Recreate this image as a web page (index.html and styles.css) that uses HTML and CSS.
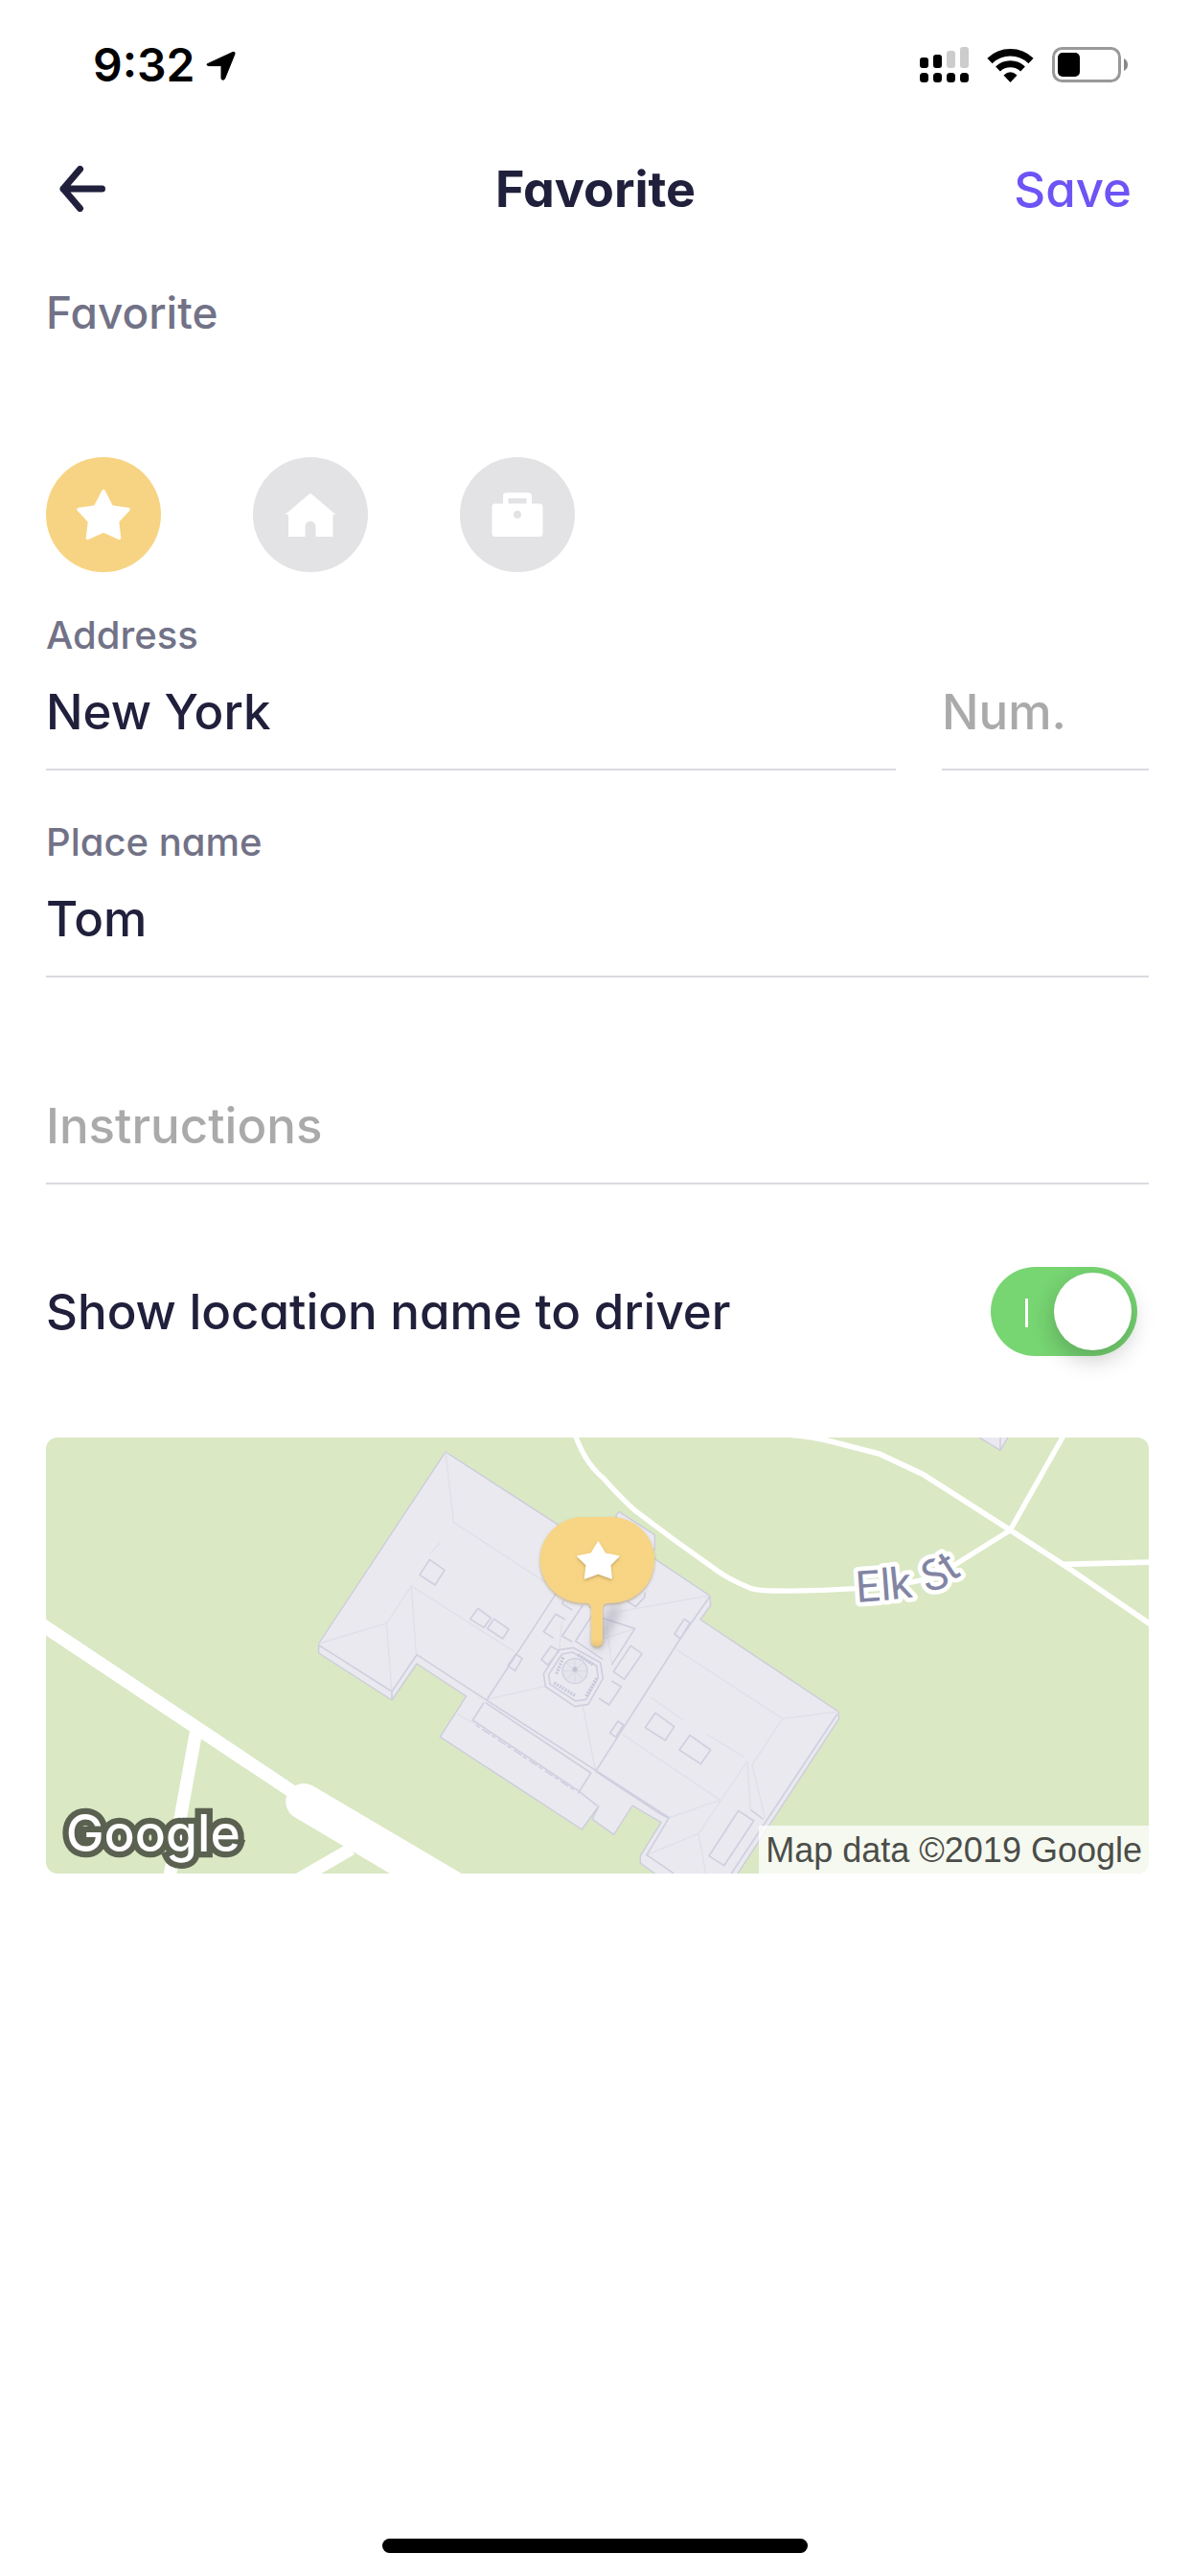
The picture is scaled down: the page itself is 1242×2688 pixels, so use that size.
FILE: index.html
```html
<!DOCTYPE html>
<html lang="en">
<head>
<meta charset="utf-8">
<meta name="viewport" content="width=device-width, initial-scale=1">
<title>Favorite</title>
<link rel="stylesheet" href="styles.css">
</head>
<body>
<div class="screen">
  <div class="status-bar">
    <div class="status-left">
      <span class="clock">9:32</span>
      <svg class="icon-location" viewBox="0 0 32 32" aria-hidden="true"><path d="M2.500 14.200 28 2.400 Q30.600 1.600 30 4.400 L19.600 30 Q18.600 32 16.600 31 Q16 30.400 16 29 V16.600 H2.800 Q.800 16.400 1 15 Z" stroke="#000" stroke-linejoin="round"/></svg>
    </div>
    <div class="status-right">
      <svg class="icon-signal" viewBox="0 0 51 37" aria-hidden="true">
        <g fill="#000"><rect y="11" width="9" height="11" rx="3"/><rect x="14" y="8" width="9" height="14" rx="3"/><rect y="27" width="9" height="10" rx="3.500"/><rect x="14" y="27" width="9" height="10" rx="3.500"/><rect x="28" y="27" width="9" height="10" rx="3.500"/><rect x="42" y="27" width="9" height="10" rx="3.500"/></g>
        <g fill="#ccc"><rect x="28" y="4" width="9" height="18" rx="3"/><rect x="42" y="0" width="9" height="22" rx="3"/></g>
      </svg>
      <svg class="icon-wifi" viewBox="0 0 49 36" aria-hidden="true">
        <path d="M3 13.500A31 31 0 0 1 46 13.500" fill="none" stroke="#000" stroke-width="7.500"/>
        <path d="M11.500 22A19 19 0 0 1 37.500 22" fill="none" stroke="#000" stroke-width="7"/>
        <path d="M24.500 36 17.500 28.500Q24.500 22 31.500 28.500Z"/>
      </svg>
      <svg class="icon-battery" viewBox="0 0 79 37" aria-hidden="true">
        <rect x="1.500" y="1.500" width="69" height="34" rx="9" fill="none" stroke="#999" stroke-width="3"/>
        <rect x="6" y="6" width="23" height="25" rx="5"/>
        <path d="M75 12Q79 14 79 18.500T75 25Z" fill="#888"/>
      </svg>
    </div>
  </div>

  <header class="nav">
    <button class="nav-back" type="button" aria-label="Back">
      <svg class="icon-back" viewBox="0 0 48 48" aria-hidden="true"><path d="M21.500 3.500 4 24 21.500 44.500M4 24H44.500" fill="none" stroke="currentColor" stroke-width="7" stroke-linecap="round" stroke-linejoin="round"/></svg>
    </button>
    <h1 class="nav-title">Favorite</h1>
    <button class="nav-save" type="submit" form="place">Save</button>
  </header>

  <form class="content" id="place">
    <fieldset class="kinds">
      <legend class="kinds-title">Favorite</legend>
      <div class="kinds-row">
        <label class="kind">
          <input class="kind-input" type="radio" name="kind" aria-label="Favorite" checked>
          <svg class="kind-icon" viewBox="0 0 120 120" aria-hidden="true"><path d="M60 35.500 68.500 52 86 54.500 74.500 67 76.500 84.500 60 77 43.500 84.500 45.500 67 34 54.500 51.500 52Z" fill="#fff" stroke="#fff" stroke-width="3.500" stroke-linejoin="round"/></svg>
        </label>
        <label class="kind">
          <input class="kind-input" type="radio" name="kind" aria-label="Home">
          <svg class="kind-icon" viewBox="0 0 120 120" aria-hidden="true"><path d="M60 37.500 86.500 60H83.500V83H65.500V73Q65.500 67 60 67T54.500 73V83H37V60H33.500Z" fill="#fff"/></svg>
        </label>
        <label class="kind">
          <input class="kind-input" type="radio" name="kind" aria-label="Work">
          <svg class="kind-icon" viewBox="0 0 120 120" aria-hidden="true"><path fill="#fff" fill-rule="evenodd" d="M37 48.500H45V41Q45 37 49 37H71Q75 37 75 41V48.500H83Q86.500 48.500 86.500 52V79.500Q86.500 83 83 83H37Q33.500 83 33.500 79.500V52Q33.500 48.500 37 48.500ZM50.500 43V48.500H69.500V43ZM60 56A4 4 0 1 0 60 64 4 4 0 1 0 60 56Z"/></svg>
        </label>
      </div>
    </fieldset>

    <div class="field-row">
      <div class="field field-wide">
        <label class="field-label" for="address">Address</label>
        <input class="field-input" id="address" type="text" value="New York">
      </div>
      <div class="field field-narrow">
        <input class="field-input" type="text" placeholder="Num." aria-label="Number">
      </div>
    </div>
    <div class="field">
      <label class="field-label" for="place-name">Place name</label>
      <input class="field-input" id="place-name" type="text" value="Tom">
    </div>
    <div class="field">
      <input class="field-input" type="text" placeholder="Instructions" aria-label="Instructions">
    </div>

    <div class="toggle-row">
      <label class="toggle-label" for="show-name">Show location name to driver</label>
      <input class="toggle" id="show-name" type="checkbox" role="switch" checked>
    </div>

    <div class="map">
      <svg class="map-canvas" viewBox="-786 60 3453 1365" role="img" aria-label="Map of the selected place">
        <defs>
          <linearGradient id="pin-fill" x1="0" y1="0" x2="0" y2="1"><stop offset="0" stop-color="#f7d584"/><stop offset=".94" stop-color="#f7d483"/><stop offset="1" stop-color="#e8c478"/></linearGradient>
          <filter id="pin-shadow" x="-20%" y="-20%" width="140%" height="150%"><feDropShadow dx="0" dy="5" stdDeviation="4" flood-color="#8a7440" flood-opacity=".5"/></filter>
          <filter id="soft" x="-80%" y="-80%" width="260%" height="260%"><feGaussianBlur stdDeviation="16"/></filter>
        </defs>
        <rect x="-786" y="60" width="3453" height="1365" fill="#dae8c4"/>
        <g fill="none" stroke="#fff" stroke-linejoin="round">
          <path d="M-800 645-320 965 10 1185" stroke-width="42"/>
          <path d="M22 1200 620 1553" stroke-width="114" stroke-linecap="round"/>
          <path d="M170 1348 0 1446M-315 975-400 1440" stroke-width="40"/>
          <path d="M868 45Q890 105 914 138T960 188Q1010 245 1060 290L1180 380 1320 480Q1370 513 1420 532 1450 540 1500 540 1620 542 1750 533 1850 530 1930 512 2000 500 2060 458L2233 350 2405 45" stroke-width="16"/>
          <path d="M1550 52Q1610 56 1680 74L1825 112 1960 175 2233 350 2410 465 2680 650M2395 457 2680 450" stroke-width="17"/>
        </g>
        <g fill="#eae9f0" stroke="#ccccdb" stroke-width="4" stroke-linejoin="round">
          <path d="M2130 56 2202 100 2228 56ZM2202 56V100"/>
          <path d="M998 305 1008 292 1120 365V410L1080 430Z"/>
          <path d="M465 105 820 335 1120 440 1292 555 1295 585 1263 630 1695 918 1697 940 1370 1440H1140L1075 1392V1370L1140 1265 1050 1212 992 1303 925 1255 945 1213 892 1287 448 997 530 870 375 768 297 882 68 735V705Z"/>
        </g>
        <g fill="none" stroke="#dfe0e7" stroke-width="4">
          <path d="M465 105 490 325 780 515M68 705 280 642 358 525 680 730M280 642 297 855M358 525 373 740M415 425 448 390M595 880 778 838M895 900 935 1105M1190 725 1520 940 1695 918M1520 940 1425 1085 1465 1250M1410 1073 1420 1225M1410 1073 1257 1300 1280 1425M1020 990 1325 1195 1165 1250M1257 1300 1095 1367M1010 605 1290 555M960 690 1058 658M970 650 985 765M830 635 820 730M500 925 555 955M1110 875 1210 945M1285 990 1400 1060"/>
        </g>
        <g fill="none" stroke="#cfcfdf" stroke-width="5" stroke-linejoin="round">
          <path d="M68 710 297 855 375 740 590 880 1165 1250 1095 1367 1180 1425M297 855V882M1292 558 1200 690 935 1105M1692 925 1350 1440M810 550 595 880M585 890 550 945 880 1165 940 1213M590 890 920 1110 880 1175M935 1105 1140 1240 1160 1250"/>
          <path d="M415 442 462 475 432 522 384 490ZM567 595 607 625 585 655 542 628ZM617 628 663 660 644 690 596 658ZM685 738 705 752 683 790 660 775Z"/>
          <path d="M803 688 772 668 810 613 840 630M862 700 830 682 895 585M958 755 872 697 925 615 1058 658 985 772M915 590 955 615M835 570 830 580 862 600M1090 545 1088 560 1060 590 1035 573"/>
          <path d="M1045 712 1080 737 1025 817 991 793ZM985 822 1015 840 977 897 945 876M1212 628 1230 640 1200 690 1182 675ZM1005 948 1022 960 998 998 980 985ZM1122 922 1181 965 1153 1008 1090 968ZM1230 992 1295 1038 1264 1082 1197 1038ZM1382 1228 1430 1260 1337 1400 1290 1370ZM1420 1225 1460 1255"/>
          <path d="M795 713 765 755 785 772 820 728ZM820 725 865 718 950 765 958 815 912 895 870 902 778 840 772 800ZM830 738 862 732 938 775 943 812 905 880 872 885 792 832 788 802Z"/>
        </g>
        <path d="M812 800 835 745M880 740 930 773M905 870 940 810M805 828 870 868" fill="none" stroke="#c8c8da" stroke-width="10" stroke-dasharray="6 4"/>
        <circle cx="870" cy="791" r="39" fill="#e4e4ed" stroke="#cfcfdf" stroke-width="4"/>
        <path d="M870 752V830M831 791H909M843 764 897 818M897 764 843 818" fill="none" stroke="#d8d8e4" stroke-width="3"/>
        <circle cx="870" cy="786" r="8" fill="#c3c3d4"/>
        <path d="M560 960 870 1165" fill="none" stroke="#cfcfdf" stroke-width="5" stroke-dasharray="14 9 30 6"/>

        <path d="M942 705 995 600" stroke="#777889" stroke-opacity=".4" stroke-width="34" stroke-linecap="round" filter="url(#soft)"/>
        <path d="M895 309H985A134 134 0 0 1 985 578H975Q957 578 957 596V697A18 18 0 0 1 921 697V596Q921 578 903 578H895A134 134 0 0 1 895 309Z" fill="url(#pin-fill)" filter="url(#pin-shadow)"/>
        <path d="M943 388 965 424 1007 432 980 459 984 500 943 485 902 500 907 459 879 432 921 424Z" fill="#fff" stroke="#fff" stroke-width="5" stroke-linejoin="round" filter="url(#pin-shadow)"/>

        <text class="map-street" x="1752 1830 1861 1930 1970 2046" y="576 570 567 550 546 512" rotate="-4 -4 -6 0 -16 -33">Elk St</text>
        <text class="map-logo" x="-724" y="1357">Google</text>
      </svg>
      <small class="map-credit">Map data ©2019 Google</small>
    </div>
  </form>

  <div class="home-indicator"></div>
</div>
</body>
</html>
```
FILE: styles.css
```css
* {
  box-sizing: border-box;
}

body {
  margin: 0;
  background: #fff;
  color: #20203c;
  font-family: Inter, "Liberation Sans", sans-serif;
  font-feature-settings: "cv11", "ss03";
  font-size: 51px;
  font-weight: 450;
}

button,
input {
  margin: 0;
  padding: 0;
  border: 0;
  background: none;
  color: inherit;
  font: inherit;
  font-feature-settings: inherit;
}

.screen {
  display: flex;
  flex-direction: column;
  min-height: 100vh;
}

/* Status bar */
.status-bar {
  display: flex;
  justify-content: space-between;
  align-items: center;
  height: 132px;
  padding: 3px 65px 0 97px;
}

.status-left {
  display: flex;
  align-items: center;
  gap: 12px;
}

.status-right {
  display: flex;
  align-items: center;
  gap: 19px;
}

.clock {
  color: #000;
  font-size: 48px;
  font-weight: 600;
}

.icon-location { width: 32px; height: 32px; }
.icon-signal { width: 51px; height: 37px; }
.icon-wifi { width: 49px; height: 36px; }
.icon-battery { width: 79px; height: 37px; }

/* Navigation */
.nav {
  display: grid;
  grid-template-columns: 1fr auto 1fr;
  align-items: center;
  height: 130px;
  padding: 0 61px 0 62px;
}

.nav-back {
  justify-self: start;
  display: flex;
}

.icon-back {
  width: 48px;
  height: 48px;
}

.nav-title {
  margin: 0;
  font-size: 52px;
  font-weight: 700;
}

.nav-save {
  justify-self: end;
  color: #6c54f5;
}

/* Form */
.content {
  padding: 36px 43px 0 48px;
}

.kinds {
  margin: 0;
  padding: 0;
  border: 0;
}

.kinds-title {
  padding: 0;
  color: #727287;
  font-size: 46px;
  line-height: 56px;
}

.kinds-row {
  display: flex;
  gap: 96px;
  padding-top: 123px;
}

.kind {
  position: relative;
  width: 120px;
  height: 120px;
}

.kind-input {
  display: block;
  width: 120px;
  height: 120px;
  border-radius: 50%;
  background: #e3e3e5;
  appearance: none;
}

.kind-input:checked {
  background: #f7d483;
}

.kind-icon {
  position: absolute;
  inset: 0;
  pointer-events: none;
}

.field-row {
  display: flex;
  align-items: flex-end;
  gap: 48px;
  margin-top: 39px;
}

.field {
  display: flex;
  flex-direction: column;
  justify-content: flex-end;
  min-height: 168px;
  border-bottom: 2px solid #dadae0;
  padding-bottom: 20px;
}

.field + .field,
.field-row + .field {
  margin-top: 48px;
}

.field-row .field {
  margin-top: 0;
}

.field-wide { flex: 1; }
.field-narrow { width: 216px; }

.field-label {
  margin-bottom: 14px;
  color: #727287;
  font-size: 40px;
  line-height: 50px;
}

.field-input {
  width: 100%;
  height: 80px;
}

.field-input::placeholder {
  color: #aaa;
  opacity: 1;
}

.toggle-row {
  display: flex;
  justify-content: space-between;
  align-items: center;
  margin-top: 86px;
  padding-right: 12px;
}

.toggle {
  position: relative;
  width: 153px;
  height: 93px;
  border-radius: 47px;
  background: linear-gradient(#fff, #fff) 36px 33px / 3px 30px no-repeat #77d572;
  appearance: none;
}

.toggle::after {
  content: "";
  position: absolute;
  top: 6px;
  right: 6px;
  width: 81px;
  height: 81px;
  border-radius: 50%;
  background: #fff;
  box-shadow: 0 9px 24px rgba(0, 0, 0, .22);
}

/* Map */
.map {
  position: relative;
  margin-top: 85px;
  border-radius: 12px;
  overflow: hidden;
}

.map-canvas {
  display: block;
  width: 100%;
}

.map-street {
  fill: #8285a3;
  stroke: #fff;
  stroke-width: 28px;
  stroke-linejoin: round;
  paint-order: stroke;
  font-family: Roboto, sans-serif;
  font-size: 136px;
}

.map-logo {
  fill: #fff;
  stroke: #5b6150;
  stroke-width: 38px;
  paint-order: stroke;
  font-family: Inter, sans-serif;
  font-size: 160px;
  font-weight: 500;
}

.map-credit {
  position: absolute;
  right: 0;
  bottom: 0;
  padding: 1px 7px 0;
  background: rgba(255, 255, 255, .75);
  color: #4b4d49;
  font-family: "Liberation Sans", Arial, sans-serif;
  font-size: 36px;
  font-weight: 400;
  line-height: 49px;
}

.home-indicator {
  width: 444px;
  height: 15px;
  margin: auto auto 24px;
  border-radius: 8px;
  background: #000;
}
```
